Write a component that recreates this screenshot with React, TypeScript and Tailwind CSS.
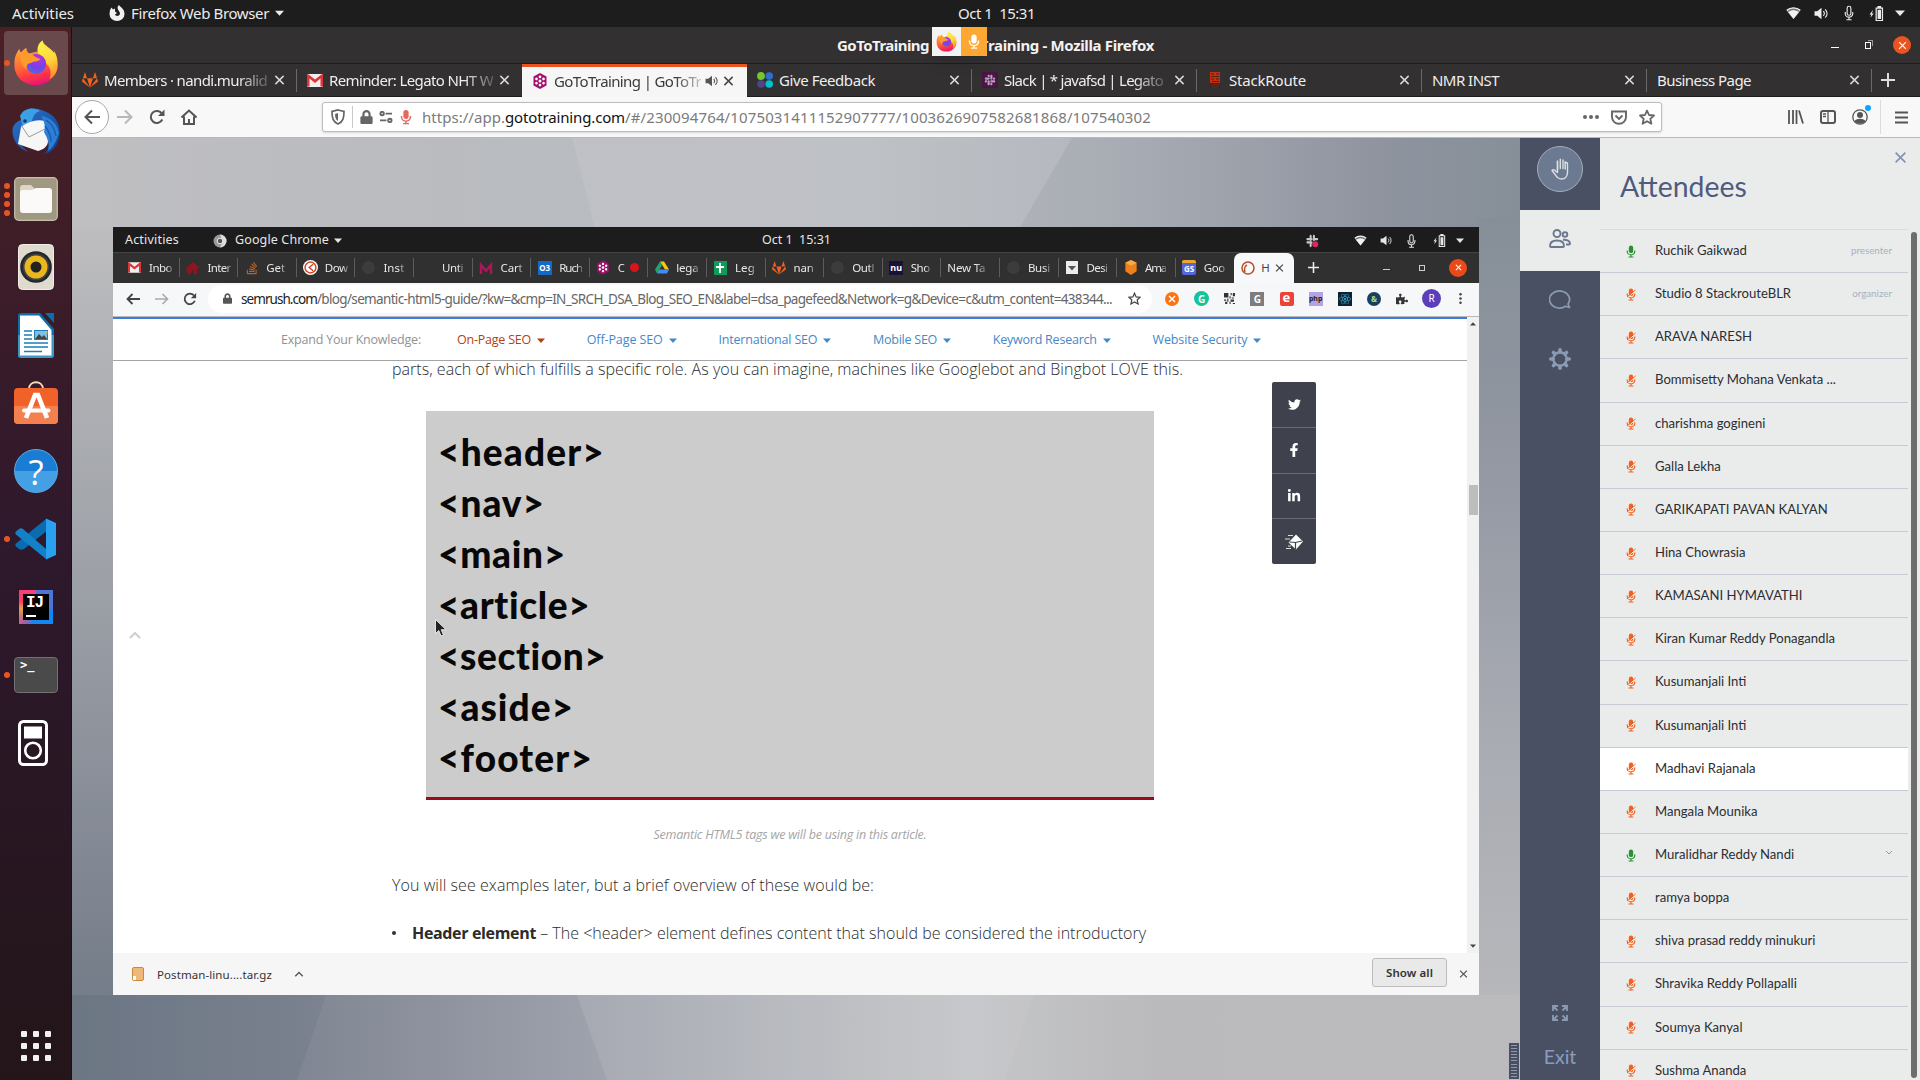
import React, { useLayoutEffect, useRef, useState } from "react";
import { FaTwitter, FaFacebookF, FaLinkedinIn, FaGitlab, FaSlack, FaStackOverflow, FaPuzzlePiece, FaReact, FaLock } from "react-icons/fa";

/* Text that is tracked so that it fills a given width exactly. */
function T({ w, className = "", children }: { w: number; className?: string; children: React.ReactNode }) {
  const ref = useRef<HTMLSpanElement>(null);
  const [ls, setLs] = useState(0);
  useLayoutEffect(() => {
    const el = ref.current;
    if (!el) return;
    const n = (el.textContent || "").length;
    setLs((w - el.getBoundingClientRect().width) / n);
  }, [w]);
  return (
    <span className={"block shrink-0 whitespace-pre " + className} style={{ width: w }}>
      <span ref={ref} className="inline-block" style={{ letterSpacing: ls }}>
        {children}
      </span>
    </span>
  );
}

const Firefox = ({ className }: { className: string }) => (
  <svg viewBox="0 0 48 48" className={className}>
    <defs>
      <linearGradient id="ffb" x1="0.3" y1="0" x2="0.6" y2="1">
        <stop offset="0" stopColor="#ffa436" />
        <stop offset="0.45" stopColor="#ff6a35" />
        <stop offset="0.75" stopColor="#ff3347" />
        <stop offset="1" stopColor="#e3127f" />
      </linearGradient>
      <linearGradient id="fff" x1="0.3" y1="0" x2="0.6" y2="1">
        <stop offset="0" stopColor="#fff24a" />
        <stop offset="0.55" stopColor="#ffd53a" />
        <stop offset="1" stopColor="#ff8a2c" />
      </linearGradient>
      <radialGradient id="ffp" cx="0.6" cy="0.25" r="0.85">
        <stop offset="0" stopColor="#b833e1" />
        <stop offset="0.5" stopColor="#7a3fe8" />
        <stop offset="1" stopColor="#4b6fe0" />
      </radialGradient>
    </defs>
    <path d="M2.500 17C4 13 5.500 11 6.500 9C7 11 7.500 12 8.500 13C10.500 10 12.500 9 14 8C14 11 15 13 17 14L36 9C42 13 46 19 46.500 26C46.500 38 36 47 24 47C11 47 1.500 38 1.500 26C1.500 22 1.600 20 2.500 17Z" fill="url(#ffb)" />
    <path d="M31 0.500C31 5 38 7 43 13.500C43 12 42.700 11.500 42.300 10.500C45.500 15 47 21 46.500 27C46 34 43 38 38 41C41 33 38 27 35 25C34 20 31 16 27 15C24 10 26 3 31 0.500Z" fill="url(#fff)" />
    <circle cx="24" cy="25" r="10.500" fill="url(#ffp)" />
    <path d="M8.500 13C12 14.500 16 13.500 20 14.500C22 17 25 19 28.500 19.500C27 23 22 21.500 19 24C15 24 13.500 27 14.500 31C9 27 6 20 8.500 13Z" fill="#ff9a2b" />
  </svg>
);

const Mic = ({ className }: { className: string }) => (
  <svg viewBox="0 0 16 20" className={className} fill="none" stroke="currentColor">
    <rect x="4.500" y="0.500" width="7" height="12" rx="3.500" fill="currentColor" stroke="none" />
    <path d="M2 8.500v1.500a6 5.500 0 0 0 12 0V8.500M8 15.500V18.500M4 18.800h8" strokeWidth="1.900" />
  </svg>
);
const MicLine = ({ className }: { className: string }) => (
  <svg viewBox="0 0 16 20" className={className} fill="none" stroke="currentColor" strokeWidth="1.500">
    <rect x="5.500" y="1" width="5" height="12" rx="2.500" />
    <path d="M3 8.500v2a5 5 0 0 0 10 0v-2M8 16v3M4.500 19h7" />
  </svg>
);
const X = ({ className, sw = 2 }: { className: string; sw?: number }) => (
  <svg viewBox="0 0 12 12" className={className} stroke="currentColor" strokeWidth={sw} fill="none">
    <path d="M1.500 1.500l9 9M10.500 1.500l-9 9" />
  </svg>
);
const Caret = ({ className }: { className: string }) => (
  <svg viewBox="0 0 10 6" className={className} fill="currentColor">
    <path d="M0 0.500h10L5 6z" />
  </svg>
);
const Wifi = ({ className }: { className: string }) => (
  <svg viewBox="0 0 16 14" className={className}>
    <path d="M0.500 4.500C5 0.300 11 0.300 15.500 4.500L8 13.500z" fill="#777" />
    <path d="M0.800 4.200C5 0.600 11 0.600 15.200 4.200" stroke="#f2f2f2" strokeWidth="1.500" fill="none" />
    <path d="M2.200 6C6 3.400 10 3.400 13.800 6L8 13.500z" fill="#f2f2f2" />
  </svg>
);
const Vol = ({ className }: { className: string }) => (
  <svg viewBox="0 0 16 14" className={className} fill="none" stroke="currentColor">
    <path d="M0.500 4.500h3L8 0.800v12.400L3.500 9.500h-3z" fill="currentColor" stroke="none" />
    <path d="M10 4.500c1.300 1.500 1.300 3.500 0 5M12 2.500c2.400 2.700 2.400 6.300 0 9" strokeWidth="1.200" />
  </svg>
);
const Battery = ({ className }: { className: string }) => (
  <svg viewBox="0 0 16 16" className={className} fill="currentColor">
    <path d="M4.500 4L0.500 9h2L1.500 12.500L5 8H3z" />
    <path d="M9 0h4v1.500h2V16H7V1.500h2zM8.300 2.800v12h5.400v-12z" fillRule="evenodd" />
    <rect x="9.200" y="4" width="3.600" height="9.800" />
  </svg>
);
const GoTo = ({ className }: { className: string }) => (
  <svg viewBox="0 0 16 16" className={className}>
    <path d="M8 0L14.500 3.500V12.500L8 16L1.500 12.500V3.500z" fill="#a3106f" />
    <circle cx="8" cy="8" r="1.500" fill="#fff" />
    {[0, 60, 120, 180, 240, 300].map((a) => (
      <circle key={a} cx="8" cy="3.900" r="1.350" fill="#fff" transform={`rotate(${a} 8 8)`} />
    ))}
  </svg>
);
const Gmail = ({ className }: { className: string }) => (
  <svg viewBox="0 0 16 13" className={className}>
    <rect width="16" height="13" rx="1" fill="#f3eeee" />
    <path d="M0 1v11.500h2.500V4.500L8 9l5.500-4.500v8H16V1a1 1 0 0 0-1.600-.6L8 5.500L1.600.4A1 1 0 0 0 0 1z" fill="#dc3535" />
  </svg>
);
const StackRoute = () => (
  <svg viewBox="0 0 16 16" className="h-4 w-4">
    <rect x="3" y="0" width="10" height="11" fill="#c2300f" />
    <rect x="3" y="11" width="10" height="5" fill="#3c2724" />
    <path d="M4 2h3M9 2h3M4 4.500h8M4 7h3M9 7h3M5 9.500h7" stroke="#5b1b10" strokeWidth="1.100" />
    <path d="M4 13h8M5 15h6" stroke="#7a2b1b" strokeWidth="0.800" />
  </svg>
);
const FourDots = () => (
  <svg viewBox="0 0 16 16" className="h-4 w-4">
    <circle cx="4" cy="4" r="3.900" fill="#76c72f" />
    <circle cx="12.200" cy="4" r="3.800" fill="#2f6fd0" />
    <circle cx="4" cy="12" r="3.800" fill="#4c4788" />
    <circle cx="12.200" cy="12" r="3.800" fill="#00c2cf" />
  </svg>
);

/* ---------- dock ---------- */
const Thunderbird = () => (
  <svg viewBox="0 0 48 48" className="h-12 w-12">
    <defs>
      <linearGradient id="tb" x1="0" y1="0" x2="1" y2="1">
        <stop offset="0" stopColor="#2b77cf" />
        <stop offset="1" stopColor="#123a8c" />
      </linearGradient>
    </defs>
    <path d="M10 6C14 1 24 0 32 4C44 8 49 18 47.500 29C46 39 40 46 32 47C38 41 38 36 37 33L8 37L16 45C5 41 0 32 0.500 22C2 16 6 14 9 13z" fill="url(#tb)" />
    <path d="M8 9C12 0 23 0 28 4C22 6 21 10 20 14L11 20C10 16 9 13 8 9z" fill="#3ba0e6" />
    <path d="M9 20C17 14 25 12 33 14L36 34C36 40 30 43 26 44L6 37z" fill="#f6f6f6" />
    <path d="M9 18L17 30L33 22" stroke="#9a9a9a" strokeWidth="1" fill="none" />
    <path d="M29 9C38 10 45 16 47 26C44 34 42 40 36 44C38 35 35 31 32 25C34 19 32 14 29 9z" fill="#2b80d6" />
    <path d="M34 13C40 17 43 22 44 29M33 19C37 24 39 29 39 35" stroke="#1c58ad" strokeWidth="1.300" fill="none" />
    <circle cx="13" cy="14" r="1.800" fill="#173a66" />
  </svg>
);
const Files = () => (
  <svg viewBox="0 0 44 44" className="h-11 w-11">
    <rect x="0.700" y="0.700" width="42.600" height="42.600" rx="4" fill="#a09880" stroke="#c5bfae" strokeWidth="1.200" />
    <path d="M6 11a3 3 0 0 1 3-3h8l4 4H35v8H6z" fill="#dcd6c7" />
    <path d="M6 16a3 3 0 0 1 3-3h9l4-2H35a3 3 0 0 1 3 3V33a3 3 0 0 1-3 3H9a3 3 0 0 1-3-3z" fill="#fbfaf8" />
  </svg>
);
const Rhythm = () => (
  <svg viewBox="0 0 36 46" className="h-[46px] w-9">
    <rect x="0.500" y="0.500" width="35" height="45" rx="4" fill="#dfdace" stroke="#f1eee6" />
    <circle cx="18" cy="23" r="15.800" fill="#24262b" />
    <circle cx="18" cy="23" r="13.300" fill="#3c4047" />
    <circle cx="18" cy="23" r="11.500" fill="#eab81c" />
    <circle cx="18" cy="23" r="5.500" fill="#222" />
  </svg>
);
const Writer = () => (
  <svg viewBox="0 0 36 45" className="h-[45px] w-9">
    <path d="M3 0H22L36 16V42a3 3 0 0 1-3 3H3a3 3 0 0 1-3-3V3a3 3 0 0 1 3-3z" fill="#0e6da8" />
    <path d="M0 22H36V42a3 3 0 0 1-3 3H3a3 3 0 0 1-3-3z" fill="#3b98c9" />
    <path d="M2 2.500H21L33.500 17V42.500H2z" fill="#fff" />
    <path d="M27 0H36V10z" fill="#0e6da8" />
    <path d="M6 18h8M6 22h8M6 26h8M6 30h24M6 34h24M6 38.500h18" stroke="#1b7fb7" strokeWidth="1.700" />
    <rect x="16.500" y="17.500" width="13" height="9" fill="#7fc0ea" stroke="#1b7fb7" />
    <path d="M17 26l4-5 3 3 2-2 3 4z" fill="#444" />
    <path d="M27 18h2.500v3z" fill="#f4b81c" />
  </svg>
);
const Software = () => (
  <svg viewBox="0 0 44 44" className="h-11 w-11">
    <path d="M15 8C15 -1 29 -1 29 8" stroke="#f4dfb5" strokeWidth="1.800" fill="none" />
    <rect y="7" width="44" height="36" rx="4" fill="#f0622a" />
    <path d="M0 25H44V39a4 4 0 0 1-4 4H4a4 4 0 0 1-4-4z" fill="#f47f4f" />
    <path d="M12 37L21 14H24L33 37" stroke="#fff" strokeWidth="4.600" fill="none" />
    <path d="M10 29.500H34.500" stroke="#fff" strokeWidth="4" strokeLinecap="round" />
  </svg>
);
const Help = () => (
  <div className="flex h-11 w-11 items-center justify-center rounded-full border border-[#5cabe8] bg-linear-to-b from-[#1b7cd3] from-50% to-[#44a0e4] to-50% font-['Open_Sans'] text-[35px] leading-none text-white">?</div>
);
const Code = () => (
  <svg viewBox="0 0 42 42" className="h-[42px] w-[42px]">
    <path d="M4 31L1 28.500C0 27.500 0 26.500 1 25.500L31 1L33 12L9 31C7 32 6 32 4 31z" fill="#0a6bb0" />
    <path d="M4 11L1 13.500C0 14.500 0 15.500 1 16.500L31 41V31L8 11C7 10 5 10 4 11z" fill="#1480c8" />
    <path d="M31 0.500L41 5V37L31 41.500z" fill="#29a0f0" />
  </svg>
);
const IJ = () => (
  <div className="flex h-[34px] w-[34px] items-center justify-center bg-[conic-gradient(#4f74d8_0deg,#4f74d8_90deg,#0f86f5_110deg,#1787f0_190deg,#b35aa0_220deg,#e9a03c_265deg,#ff3a6c_290deg,#f2447a_350deg)]">
    <div className="flex h-[26px] w-[26px] flex-col bg-black px-[3px] pt-px">
      <span className="h-[16px] font-['Liberation_Mono'] text-[16px] font-bold leading-[17px] tracking-[-1px] text-white">IJ</span>
      <span className="mt-[4px] h-[2px] w-[10px] bg-white" />
    </div>
  </div>
);
const Terminal = () => (
  <div className="h-[36px] w-11 rounded-[4px] border border-[#727272] bg-[#4a4a4a] pl-[5px] font-['DejaVu_Sans_Mono'] text-[12px] font-bold leading-[15px] text-white">&gt;_</div>
);
const IPod = () => (
  <svg viewBox="0 0 30 46" className="mr-[6px] h-[46px] w-[30px]" fill="none" stroke="#fff">
    <rect x="1.500" y="1.500" width="27" height="43" rx="4" strokeWidth="3" />
    <rect x="6" y="6.500" width="18" height="12" fill="#fff" stroke="none" />
    <circle cx="15" cy="30.500" r="7.800" strokeWidth="2.600" />
  </svg>
);

const dock: { icon: React.ReactNode; dots: number; on?: boolean }[] = [
  { icon: <Firefox className="h-[46px] w-[46px]" />, dots: 1, on: true },
  { icon: <Thunderbird />, dots: 0 },
  { icon: <Files />, dots: 4 },
  { icon: <Rhythm />, dots: 0 },
  { icon: <Writer />, dots: 0 },
  { icon: <Software />, dots: 0 },
  { icon: <Help />, dots: 0 },
  { icon: <Code />, dots: 1 },
  { icon: <IJ />, dots: 0 },
  { icon: <Terminal />, dots: 1 },
  { icon: <IPod />, dots: 0 },
];

function Dock() {
  return (
    <div className="flex w-[72px] shrink-0 flex-col border-r border-[#1c0f1c] bg-linear-to-b from-[#4a2024] via-[#2e182c] via-50% to-[#231519] pt-[2px]">
      {dock.map((d, i) => (
        <div key={i} className="flex h-[68px] items-center">
          <div className={"ml-1 flex h-16 w-16 items-center rounded-[4px] " + (d.on ? "bg-[#6a494c]" : "")}>
            <div className="flex w-[6px] flex-col items-start gap-[3px]">
              {Array.from({ length: d.dots }, (_, k) => (
                <span key={k} className="h-[6px] w-[6px] shrink-0 rounded-full bg-[#e95420]" />
              ))}
            </div>
            <div className="flex w-[52px] items-center justify-center">{d.icon}</div>
          </div>
        </div>
      ))}
      <div className="mt-auto mb-[19px] ml-[21px] grid w-[30px] grid-cols-3 gap-[6px]">
        {Array.from({ length: 9 }, (_, k) => (
          <span key={k} className="h-[6px] w-[6px] rounded-[1px] bg-[#f1f1f1]" />
        ))}
      </div>
    </div>
  );
}

/* ---------- Firefox window ---------- */
const tabs: { label: string; w: number; icon?: React.ReactNode; active?: boolean; fade?: boolean }[] = [
  { label: "Members · nandi.muralid", w: 163, icon: <FaGitlab className="h-4 w-4 text-[#f4601f]" />, fade: true },
  { label: "Reminder: Legato NHT W", w: 164, icon: <Gmail className="h-[13px] w-4" />, fade: true },
  { label: "GoToTraining | GoToTr", w: 147, icon: <GoTo className="h-[18px] w-4" />, active: true, fade: true },
  { label: "Give Feedback", w: 96, icon: <FourDots /> },
  { label: "Slack | * javafsd | Legato", w: 159, icon: <span className="flex h-4 w-4 items-center justify-center bg-[#4b1447]"><FaSlack className="h-3 w-3 text-[#b9a0b8]" /></span>, fade: true },
  { label: "StackRoute", w: 77, icon: <StackRoute /> },
  { label: "NMR INST", w: 67 },
  { label: "Business Page", w: 94 },
];

function FirefoxTabs() {
  return (
    <div className="flex h-[33px] shrink-0 bg-[#323031]">
      {tabs.map((t, i) => (
        <div
          key={i}
          className={
            "flex w-[225px] shrink-0 items-center pl-[10px] " +
            (t.active ? "border-t-[3px] border-[#e95420] bg-[#f6f6f6] pb-[3px] text-[#3a3a3a]" : "border-b border-[#1d1d1d] text-[#eeeeee]")
          }
        >
          {t.icon && <span className="mr-[6px] flex w-4 items-center">{t.icon}</span>}
          <div className={t.active ? "w-[148px]" : t.icon ? "w-[165px]" : "w-[187px]"}>
            <T w={t.w} className={"text-[15px] leading-6 " + (t.fade ? "[mask-image:linear-gradient(90deg,#000_82%,rgba(0,0,0,0.25))]" : "")}>{t.label}</T>
          </div>
          {t.active && <Vol className="ml-[3px] h-[12px] w-[14px] text-[#555]" />}
          <X className={"h-[12px] w-[11px] " + (t.active ? "ml-[4px] text-[#444]" : "ml-[5px] text-[#d8d8d8]")} sw={1.6} />
          {!t.active && i !== 1 && <span className="ml-auto h-[23px] w-px bg-[#6a6869]" />}
        </div>
      ))}
      <div className="flex flex-1 items-center border-b border-[#1d1d1d] pl-[9px]">
        <svg viewBox="0 0 14 14" className="h-[14px] w-[14px]" stroke="#dedede" strokeWidth="2"><path d="M7 0v14M0 7h14" /></svg>
      </div>
    </div>
  );
}

function FirefoxToolbar() {
  const s = { fill: "none", stroke: "#555", strokeWidth: 2 };
  return (
    <div className="flex h-[41px] shrink-0 items-center border-b border-[#b8b8b8] bg-[#f8f8f8]">
      <div className="ml-[3px] flex h-[34px] w-[34px] items-center justify-center rounded-full border border-[#a8a8a8] bg-white">
        <svg viewBox="0 0 16 16" className="h-4 w-4" {...s}><path d="M16 8H1.500M8 1.500L1.500 8L8 14.500" /></svg>
      </div>
      <svg viewBox="0 0 16 16" className="ml-[8px] h-4 w-4" fill="none" stroke="#b8b8b8" strokeWidth="2"><path d="M0 8h14.500M8 1.500L14.500 8L8 14.500" /></svg>
      <svg viewBox="0 0 16 16" className="ml-[16px] h-4 w-4" {...s}><path d="M13.300 10.500A6 6 0 1 1 13 5" /><path d="M15.500 0.500V7H9z" fill="#555" stroke="none" /></svg>
      <svg viewBox="0 0 16 16" className="ml-[16px] h-4 w-4" {...s}><path d="M0.500 8.500L8 1.500L15.500 8.500M3 7.500V15h10V7.500M8 15V10" /></svg>
      <div className="ml-[125px] flex h-[30px] w-[1340px] items-center rounded-[3px] border border-[#bcbcbc] bg-white shadow-sm">
        <svg viewBox="0 0 14 16" className="ml-[8px] h-4 w-[14px]" fill="none" stroke="#666" strokeWidth="1.700"><path d="M7 1L13 2.500C13 9 12 13 7 15C2 13 1 9 1 2.500z" /><path d="M7 4v8C5 11 4.200 9 4 5z" fill="#666" stroke="none" /></svg>
        <span className="ml-[7px] h-[22px] w-px bg-[#c9c9c9]" />
        <FaLock className="ml-[7px] h-[14px] w-[13px] text-[#666]" />
        <svg viewBox="0 0 16 14" className="ml-[6px] h-[12px] w-[14px]" fill="none" stroke="#666" strokeWidth="2.200"><path d="M7.500 3H15M1 11H8.500" /><circle cx="3.500" cy="3" r="2" /><circle cx="12.500" cy="11" r="2" /></svg>
        <Mic className="ml-[7px] h-4 w-[12px] text-[#e5685c]" />
        <T w={83} className="ml-[10px] text-[15px] leading-6 text-[#7b7b7b]">https://app.</T>
        <T w={120} className="text-[15px] leading-6 text-[#111]">gototraining.com</T>
        <T w={526} className="text-[15px] leading-6 text-[#7b7b7b]">/#/230094764/1075031411152907777/1003626907582681868/107540302</T>
        <svg viewBox="0 0 16 4" className="ml-[432px] h-1 w-4" fill="#666"><circle cx="2" cy="2" r="2" /><circle cx="8" cy="2" r="2" /><circle cx="14" cy="2" r="2" /></svg>
        <svg viewBox="0 0 16 15" className="ml-[12px] h-[15px] w-4" fill="none" stroke="#666" strokeWidth="1.900"><path d="M1 1.500H15V7a7 6.800 0 0 1-14 0z" /><path d="M4.500 5.500L8 9l3.500-3.500" /></svg>
        <svg viewBox="0 0 16 16" className="ml-[12px] h-4 w-4" fill="none" stroke="#666" strokeWidth="1.800"><path d="M8 1.500l2 4.500 5 .5-3.700 3.300 1.100 4.900L8 12.200 3.600 14.700l1.100-4.900L1 6.500 6 6z" strokeLinejoin="round" /></svg>
      </div>
      <svg viewBox="0 0 16 14" className="ml-[126px] h-[14px] w-4" {...s}><path d="M1 0V14M5 0V14M8.500 0V14M11 0.500L15 13.500" strokeWidth="1.800" /></svg>
      <svg viewBox="0 0 16 14" className="ml-[16px] h-[14px] w-4" {...s}><rect x="1" y="1" width="14" height="12" rx="2" /><path d="M8 1V13M3 4h3M3 6.500h3" strokeWidth="1.300" /></svg>
      <div className="relative ml-[16px] h-4 w-4">
        <svg viewBox="0 0 16 16" className="h-4 w-4"><circle cx="8" cy="8" r="7.200" fill="none" stroke="#555" strokeWidth="1.300" /><circle cx="8" cy="6" r="3" fill="#555" /><path d="M2.500 12C5 9 11 9 13.500 12C11 15.500 5 15.500 2.500 12z" fill="#555" /></svg>
        <span className="absolute -right-[3px] -top-[4px] h-[6px] w-[6px] rounded-full bg-[#0aa5ff]" />
      </div>
      <span className="ml-[12px] h-[34px] w-px bg-[#dcdcdc]" />
      <svg viewBox="0 0 13 13" className="ml-[14px] h-[13px] w-[13px]" {...s}><path d="M0 1.500H13M0 6.500H13M0 11.500H13" /></svg>
    </div>
  );
}

/* ---------- shared screen ---------- */
const Globe = () => <span className="h-[13px] w-[13px] rounded-full bg-[#3b3c3c]" />;
const miniTabs: { label: string; w: number; icon?: React.ReactNode; rec?: boolean }[] = [
  { label: "Inbo", w: 23, icon: <Gmail className="h-[11px] w-[13px]" /> },
  { label: "Inter", w: 23, icon: <svg viewBox="0 0 14 14" className="h-[14px] w-[14px]"><path d="M0 7L7 1l7 6-3 1v5H8L7 8l-2 5H2z" fill="#8e1420" /></svg> },
  { label: "Get", w: 19, icon: <FaStackOverflow className="h-[14px] w-[14px] text-[#b5622e]" /> },
  { label: "Dow", w: 23, icon: <span className="flex h-[15px] w-[15px] items-center justify-center rounded-full bg-white"><svg viewBox="0 0 10 10" className="h-[13px] w-[13px]" stroke="#d8421f" strokeWidth="1.100" fill="none"><circle cx="5" cy="5" r="4.200" /><path d="M7 2.500L4 5l3 2.500" /></svg></span> },
  { label: "Inst", w: 21, icon: <Globe /> },
  { label: "Unti", w: 21, icon: <span className="h-3 w-[13px]" /> },
  { label: "Cart", w: 22, icon: <svg viewBox="0 0 14 12" className="h-3 w-[14px]" stroke="#b01558" strokeWidth="2.400" fill="none"><path d="M2 12V3l5 6 5-6v9" /></svg> },
  { label: "Ruch", w: 23, icon: <span className="flex h-[14px] w-[14px] items-center justify-center bg-[#1469c4] text-[8px] font-bold leading-none text-white">O3</span> },
  { label: "C", w: 7, icon: <GoTo className="h-[15px] w-[14px]" />, rec: true },
  { label: "lega", w: 22, icon: <svg viewBox="0 0 14 12" className="h-[13px] w-[14px]"><path d="M5 0h4l5 8h-4z" fill="#fbc518" /><path d="M5 0L0 8l2 4L7 4z" fill="#1fa463" /><path d="M2 12l2-4h10l-2 4z" fill="#4688f4" /></svg> },
  { label: "Leg", w: 20, icon: <span className="flex h-[14px] w-[13px] items-center justify-center bg-[#109b5a]"><svg viewBox="0 0 10 10" className="h-[10px] w-[10px]" stroke="#fff" strokeWidth="1.800"><path d="M1 4h8M5 0v10" /></svg></span> },
  { label: "nan", w: 20, icon: <FaGitlab className="h-[14px] w-[14px] text-[#f4601f]" /> },
  { label: "Outl", w: 22, icon: <Globe /> },
  { label: "Sho", w: 19, icon: <span className="flex h-[14px] w-[14px] items-center justify-center bg-[#171335] text-[9px] font-bold leading-none text-white">nu</span> },
  { label: "New Ta", w: 38 },
  { label: "Busi", w: 22, icon: <Globe /> },
  { label: "Desi", w: 21, icon: <span className="flex h-[13px] w-[12px] items-center justify-center bg-[#ececec]"><Caret className="h-2 w-2 text-[#555]" /></span> },
  { label: "Ama", w: 21, icon: <svg viewBox="0 0 14 16" className="h-[15px] w-[14px]"><path d="M7 0l6 3v9l-6 4-6-4V3z" fill="#f0811a" /><path d="M7 0l6 3-6 3-6-3z" fill="#f9a84a" /></svg> },
  { label: "Goo", w: 21, icon: <span className="flex h-[15px] w-[14px] items-center justify-center rounded-[2px] border-t-[3px] border-[#f0a62e] bg-[#5466d8] text-[8px] font-bold leading-none text-white">GS</span> },
];

function MiniTabs() {
  return (
    <div className="flex h-[31px] shrink-0 items-end border-t border-[#444] bg-[#303030] pl-[8px]">
      {miniTabs.map((t, i) => (
        <div key={i} className="flex h-[30px] w-[58.6px] shrink-0 items-center pb-px pl-[6px]">
          {t.icon && <span className="mr-[7px] flex w-[15px] shrink-0 items-center justify-center">{t.icon}</span>}
          <T w={t.w} className="text-[11.500px] leading-5 text-[#e8e8e8] [mask-image:linear-gradient(90deg,#000_75%,rgba(0,0,0,0.35))]">{t.label}</T>
          {t.rec && <span className="ml-[5px] h-[9px] w-[9px] rounded-full bg-[#d8141c]" />}
          {i !== 18 && <span className="ml-auto h-[19px] w-px shrink-0 bg-[#5c5c5c]" />}
        </div>
      ))}
      <div className="flex h-[30px] w-[60px] shrink-0 items-center rounded-t-[7px] bg-[#f7f8fa] pb-px pl-[7px]">
        <svg viewBox="0 0 14 14" className="h-[14px] w-[14px]" fill="none" stroke="#b5502a" strokeWidth="1.500"><circle cx="7" cy="7" r="6" /><path d="M4 11C3 8 4 5 6 4" /></svg>
        <T w={7} className="ml-[6px] text-[11.500px] leading-5 text-[#444]">H</T>
        <X className="ml-[7px] h-[10px] w-[9px] text-[#444]" sw={1.6} />
      </div>
      <div className="flex h-[30px] flex-1 items-center pb-px">
        <svg viewBox="0 0 12 12" className="ml-[14px] h-[11px] w-[11px]" stroke="#eee" strokeWidth="1.700"><path d="M6 0v12M0 6h12" /></svg>
        <span className="ml-[64px] mt-[4px] h-[1.500px] w-[7px] bg-[#ccc]" />
        <span className="ml-[29px] h-[6px] w-[6px] border border-[#ccc]" />
        <span className="ml-[24px] flex h-[18px] w-[18px] items-center justify-center rounded-full bg-[#ea4a1a] text-white"><X className="h-[7px] w-[7px]" sw={1.800} /></span>
      </div>
    </div>
  );
}

function MiniToolbar() {
  return (
    <div className="flex h-[34px] shrink-0 items-center border-b border-[#b9b9b9] bg-[#f6f7f9] pb-[2px]">
      <svg viewBox="0 0 14 12" className="ml-[13px] h-[12px] w-[14px]" fill="none" stroke="#444" strokeWidth="1.800"><path d="M14 6H1.500M6.500 1L1.500 6l5 5" /></svg>
      <svg viewBox="0 0 14 12" className="ml-[15px] h-[12px] w-[14px]" fill="none" stroke="#aaa" strokeWidth="1.600"><path d="M0 6h12.500M7.500 1l5 5-5 5" /></svg>
      <svg viewBox="0 0 16 16" className="ml-[14px] h-[14px] w-[14px]" fill="none" stroke="#444" strokeWidth="2"><path d="M13.500 10A6 6 0 1 1 12.500 4" /><path d="M15 1V7H9z" fill="#444" stroke="none" /></svg>
      <div className="ml-[11px] flex h-[28px] w-[944px] items-center rounded-full bg-white">
        <FaLock className="ml-[15px] h-[11px] w-[9px] text-[#555]" />
        <T w={76} className="ml-[9px] text-[13.500px] leading-5 text-[#222]">semrush.com</T>
        <T w={795} className="text-[13.500px] leading-5 text-[#666]">/blog/semantic-html5-guide/?kw=&amp;cmp=IN_SRCH_DSA_Blog_SEO_EN&amp;label=dsa_pagefeed&amp;Network=g&amp;Device=c&amp;utm_content=438344...</T>
        <svg viewBox="0 0 16 16" className="ml-[16px] h-[13px] w-[13px]" fill="none" stroke="#444" strokeWidth="1.500"><path d="M8 1.500l2 4.500 5 .5-3.700 3.300 1.100 4.900L8 12.200 3.600 14.700l1.100-4.900L1 6.500 6 6z" /></svg>
      </div>
      <div className="ml-[13px] flex w-[243px] items-center justify-between text-[10px] font-bold leading-none text-white">
        <span className="flex h-[14px] w-[14px] items-center justify-center rounded-full bg-[#fa7414]"><X className="h-[8px] w-[8px]" sw={2.200} /></span>
        <span className="flex h-[15px] w-[15px] items-center justify-center rounded-full bg-[#15c39a]">G</span>
        <svg viewBox="0 0 10 10" className="h-[11px] w-[11px]" fill="#333"><path d="M0 0h4v4H0zM6 0h1v2H6zM8 0h2v3H8zM5 3h1v2H5zM0 6h2v1H0zM3 5h1v3H3zM1 8h2v2H1zM6 6h3v2H6zM5 8h1v2H5zM8 9h2v1H8zM7 4h2v1H7z" /></svg>
        <span className="flex h-[14px] w-[14px] items-center justify-center bg-[#7d7d7d]">G</span>
        <span className="flex h-[14px] w-[14px] items-center justify-center rounded-[2px] bg-[#ec4338] pb-[2px] text-[13px]">e</span>
        <span className="flex h-[14px] w-[14px] items-center justify-center bg-[#b3a3e3] text-[7px] text-[#222]">php</span>
        <span className="flex h-[14px] w-[14px] items-center justify-center bg-[#10202e]"><FaReact className="h-3 w-3 text-[#2fa8d8]" /></span>
        <span className="flex h-[14px] w-[14px] items-center justify-center rounded-full bg-[#154063] text-[8px] text-[#b6dd6a]">&amp;</span>
        <FaPuzzlePiece className="h-[12px] w-[12px] text-[#333]" />
      </div>
      <span className="ml-[14px] flex h-[19px] w-[19px] items-center justify-center rounded-full bg-[#5b3fb8] text-[10px] text-white">R</span>
      <svg viewBox="0 0 3 13" className="ml-[18px] h-[11px] w-[3px]" fill="#444"><circle cx="1.500" cy="1.500" r="1.500" /><circle cx="1.500" cy="6.500" r="1.500" /><circle cx="1.500" cy="11.500" r="1.500" /></svg>
    </div>
  );
}

const nav: [string, number][] = [
  ["Off-Page SEO", 76],
  ["International SEO", 99],
  ["Mobile SEO", 64],
  ["Keyword Research", 104],
  ["Website Security", 95],
];
const tags = ["<header>", "<nav>", "<main>", "<article>", "<section>", "<aside>", "<footer>"];
const tagW = [167, 107, 128, 153, 169, 136, 155];

function SharedScreen() {
  return (
    <div className="mt-[89px] ml-[41px] flex h-[768px] w-[1366px] shrink-0 flex-col bg-white">
      <div className="flex h-[25px] shrink-0 items-center bg-[#1c1c1c] pt-[2px] text-[12.500px] leading-none text-[#e6e6e6]">
        <T w={54} className="ml-[12px]">Activities</T>
        <svg viewBox="0 0 14 14" className="ml-[34px] h-[14px] w-[14px]"><circle cx="7" cy="7" r="6.500" fill="#999" /><path d="M7 .5A6.500 6.500 0 0 1 7 13.500L10 8z" fill="#ddd" /><circle cx="7" cy="7" r="2.800" fill="#555" stroke="#eee" strokeWidth="1" /></svg>
        <T w={94} className="ml-[8px]">Google Chrome</T>
        <Caret className="ml-[5px] h-[5px] w-[8px]" />
        <T w={69} className="ml-[420px]">Oct 1  15:31</T>
        <svg viewBox="0 0 14 14" className="ml-[475px] h-[14px] w-[13px]" fill="none" strokeWidth="2.200" strokeLinecap="round">
          <path d="M5 1.500V6M8.500 1.500V6M1.500 5H6M8.500 5H12M1.500 8.500H6M5 8.500V12.500" stroke="#c9c9c9" />
          <circle cx="10" cy="10.500" r="3.200" fill="#e0245e" stroke="none" />
        </svg>
        <Wifi className="ml-[35px] h-[11px] w-[13px]" />
        <Vol className="ml-[13px] h-[11px] w-[13px]" />
        <MicLine className="ml-[13px] h-[14px] w-[11px]" />
        <Battery className="ml-[16px] h-[13px] w-[13px]" />
        <Caret className="ml-[10px] h-[5px] w-[8px]" />
      </div>
      <MiniTabs />
      <MiniToolbar />
      <div className="flex h-[636px] shrink-0">
        <div className="flex w-[1354px] shrink-0 flex-col overflow-hidden">
          <div className="flex h-[44px] shrink-0 items-center border-t-2 border-b border-t-[#3f7ce0] border-b-[#a5a5a5] pt-[2px] font-['Open_Sans'] text-[12.500px] text-[#4388c9]">
            <T w={140} className="ml-[168px] text-[#929292]">Expand Your Knowledge:</T>
            <T w={74} className="ml-[36px] text-[#b5400f]">On-Page SEO</T>
            <Caret className="ml-[6px] h-[5px] w-[8px] text-[#b5400f]" />
            {nav.map(([l, w]) => (
              <div key={l} className="ml-[41.700px] flex items-center">
                <T w={w}>{l}</T>
                <Caret className="ml-[6px] h-[5px] w-[8px]" />
              </div>
            ))}
          </div>
          <div className="flex">
            <div className="flex w-[313px] shrink-0 flex-col">
              <svg viewBox="0 0 12 8" className="mt-[270px] ml-[16px] h-2 w-3" fill="none" stroke="#cfcfcf" strokeWidth="2"><path d="M1 7l5-5 5 5" /></svg>
            </div>
            <div className="flex w-[728px] shrink-0 flex-col">
              <T w={791} className="-ml-[34px] -mt-[4px] font-['Open_Sans'] text-[16px] font-light leading-6 text-[#2b2b2b]">parts, each of which fulfills a specific role. As you can imagine, machines like Googlebot and Bingbot LOVE this.</T>
              <div className="relative mt-[30px] flex h-[389px] flex-col border-b-[3px] border-[#970c17] bg-[#cccccc] pt-[15px] pl-[12px]">
                {tags.map((t, i) => (
                  <T key={t} w={tagW[i]} className="h-[51px] font-['Lato'] text-[37px] font-black leading-[51px] text-[#080808]">{t}</T>
                ))}
                <svg viewBox="0 0 12 18" className="absolute left-[9px] top-[208px] h-[18px] w-[12px]"><path d="M0.500 0.500V14.500L3.800 11.500L6 17l2.500-1-2.300-5.300H11z" fill="#222" stroke="#eee" strokeWidth="0.900" /></svg>
              </div>
              <T w={273} className="mt-[25px] self-center font-['Open_Sans'] text-[12.500px] italic leading-5 text-[#a5a5a5]">Semantic HTML5 tags we will be using in this article.</T>
              <T w={482} className="-ml-[34px] mt-[28px] font-['Open_Sans'] text-[16px] font-light leading-6 text-[#2b2b2b]">You will see examples later, but a brief overview of these would be:</T>
              <div className="-ml-[34px] mt-[24px] flex items-center font-['Open_Sans'] text-[16px] leading-6 text-[#2b2b2b]">
                <span className="mr-[16px] h-[4px] w-[4px] rounded-full bg-[#333]" />
                <T w={124} className="font-bold">Header element</T>
                <T w={610} className="font-light"> – The &lt;header&gt; element defines content that should be considered the introductory</T>
              </div>
            </div>
            <div className="mt-[21px] ml-[118px] flex h-[182px] w-[44px] flex-col divide-y divide-[#6a6b76] overflow-hidden rounded-[2px] bg-[#3f414c] text-white">
              <span className="flex flex-1 items-center justify-center"><FaTwitter className="h-[13px] w-[13px]" /></span>
              <span className="flex flex-1 items-center justify-center"><FaFacebookF className="h-[14px] w-[14px]" /></span>
              <span className="flex flex-1 items-center justify-center"><FaLinkedinIn className="h-[14px] w-[14px]" /></span>
              <span className="flex flex-1 items-center justify-center">
                <svg viewBox="0 0 18 16" className="h-4 w-[18px]"><path d="M11 0.500L18 7.500L11 15.500L3.500 8.500z" fill="#fff" /><path d="M4.500 8L10.500 8.500L17 7M10.500 8.500V15" stroke="#3f414c" strokeWidth="1.200" fill="none" /><path d="M3 1.500h5M0 5h5M1 14.500h5M3 12h3" stroke="#ddd" strokeWidth="1" /></svg>
              </span>
            </div>
          </div>
        </div>
        <div className="flex w-[12px] flex-col items-center bg-[#f1f1f1] py-[5px]">
          <Caret className="h-[4px] w-[6px] rotate-180 text-[#444]" />
          <span className="mt-[159px] ml-px h-[30px] w-[9px] bg-[#bdbdbd]" />
          <Caret className="mt-auto h-[4px] w-[6px] text-[#444]" />
        </div>
      </div>
      <div className="flex flex-1 items-center bg-[#f6f6f6] text-[11.500px] text-[#333]">
        <span className="ml-[19px] flex h-[14px] w-[12px] items-end rounded-[2px] border border-[#c98a3c] bg-[#f0b878]"><i className="h-1 w-[3px] bg-white" /></span>
        <T w={115} className="ml-[13px] mt-[1px]">Postman-linu....tar.gz</T>
        <svg viewBox="0 0 12 8" className="ml-[22px] h-[6px] w-[10px]" fill="none" stroke="#555" strokeWidth="1.800"><path d="M1 7l5-5 5 5" /></svg>
        <div className="-mt-[3px] ml-[1068px] flex h-[29px] w-[75px] items-center justify-center rounded-[3px] border border-[#bcbcbc] bg-[#e9e9e9]">
          <T w={47} className="font-semibold">Show all</T>
        </div>
        <X className="ml-[12px] h-[10px] w-[9px] text-[#555]" sw={1.700} />
      </div>
    </div>
  );
}

/* ---------- attendees ---------- */
const people: { n: string; tag?: string; live?: boolean; sel?: boolean; menu?: boolean }[] = [
  { n: "Ruchik Gaikwad", tag: "presenter", live: true },
  { n: "Studio 8 StackrouteBLR", tag: "organizer" },
  { n: "ARAVA NARESH" },
  { n: "Bommisetty Mohana Venkata ..." },
  { n: "charishma gogineni" },
  { n: "Galla Lekha" },
  { n: "GARIKAPATI PAVAN KALYAN" },
  { n: "Hina Chowrasia" },
  { n: "KAMASANI HYMAVATHI" },
  { n: "Kiran Kumar Reddy Ponagandla" },
  { n: "Kusumanjali Inti" },
  { n: "Kusumanjali Inti" },
  { n: "Madhavi Rajanala", sel: true },
  { n: "Mangala Mounika" },
  { n: "Muralidhar Reddy Nandi", live: true, menu: true },
  { n: "ramya boppa" },
  { n: "shiva prasad reddy minukuri" },
  { n: "Shravika Reddy Pollapalli" },
  { n: "Soumya Kanyal" },
  { n: "Sushma Ananda" },
];

function Rail() {
  return (
    <div className="flex w-[80px] shrink-0 flex-col items-center bg-[#495063] text-[#8b9bb4]">
      <div className="mt-[8px] flex h-[46px] w-[46px] shrink-0 items-center justify-center rounded-full border border-[#a3aebd] bg-[#6b7a90]">
        <svg viewBox="0 0 18 22" className="h-[22px] w-[18px]" fill="none" stroke="#dcdfe4" strokeWidth="1.400" strokeLinecap="round" strokeLinejoin="round">
          <path d="M6.500 12V3.200M9.300 10.500V1.200M12 10.500V2M14.200 11V4" />
          <path d="M16.500 6v8.500c0 4-2.500 6.500-6 6.500c-3 0-4.500-1.500-6-4L1 12.500c1.300-1.400 3-.6 3.500.5l2 1.500V3.200M14.200 4.500c1.500-.5 2.300 0 2.300 2.500" />
        </svg>
      </div>
      <div className="mt-[18px] flex h-[61px] w-full shrink-0 items-center justify-center bg-[#eaeceb]">
        <svg viewBox="0 0 22 19" className="mb-[5px] h-[19px] w-[22px]" fill="none" stroke="#6b7890" strokeWidth="1.900"><circle cx="8" cy="4.500" r="3.500" /><circle cx="16" cy="5.500" r="2.300" /><path d="M1 17C1 13 4 11.500 8 11.500S15 13 15 17C15 17.700 14.500 18 14 18H2C1.500 18 1 17.700 1 17zM14 10.800C18 10.500 21 12 21 14.500C21 15 20.500 15.500 20 15.500H17" /></svg>
      </div>
      <svg viewBox="0 0 22 20" className="mt-[18px] h-[20px] w-[22px]" fill="none" stroke="currentColor" strokeWidth="1.700"><path d="M20.500 18.500L16.500 17.300A10 8.500 0 1 1 19 15z" strokeLinejoin="round" /></svg>
      <svg viewBox="0 0 22 22" className="mt-[39px] h-[22px] w-[22px]" fill="none" stroke="currentColor">
        <circle cx="11" cy="11" r="6.700" strokeWidth="2.400" />
        {[0, 45, 90, 135, 180, 225, 270, 315].map((a) => (
          <path key={a} d="M11 1.800V4" strokeWidth="3.600" strokeLinecap="round" transform={`rotate(${a} 11 11)`} />
        ))}
      </svg>
      <svg viewBox="0 0 16 16" className="mt-auto h-4 w-4" fill="none" stroke="currentColor" strokeWidth="1.800"><path d="M1 6V1h5M1 1l4.500 4.500M10 1h5v5M15 1l-4.500 4.500M1 10v5h5M1 15l4.500-4.500M15 10v5h-5M15 15l-4.500-4.500" /></svg>
      <span className="mt-[22px] mb-[9px] font-['Lato'] text-[19.500px] leading-7 text-[#8b9bc0]">Exit</span>
    </div>
  );
}

function Attendees() {
  return (
    <div className="flex w-[320px] shrink-0 flex-col bg-[#eaeceb] font-['Lato']">
      <div className="flex h-[91px] shrink-0 justify-between">
        <h1 className="mt-[30px] ml-[20px] text-[28.400px] leading-9 text-[#4f5b7e]">Attendees</h1>
        <X className="mt-[13px] mr-[13px] h-[13px] w-[13px] text-[#7c92ac]" sw={1.400} />
      </div>
      <div className="flex min-h-0 flex-1">
        <div className="h-full w-[308px] overflow-hidden border-t border-[#d9dbdd]">
          {people.map((p, i) => (
            <div key={i} className={"flex h-[43.150px] items-center border-b border-[#c6cad4] pb-[2px] " + (p.sel ? "bg-white" : "")}>
              <div className="relative mt-[2px] ml-[26px] h-[13px] w-[10px]">
                <Mic className={"h-[13px] w-[10px] " + (p.live ? "text-[#2b9132]" : "text-[#f4601e]")} />
                {!p.live && (
                  <svg viewBox="0 0 10 13" className="absolute inset-0 h-[13px] w-[10px]"><path d="M0.500 10.500L9.500 3" stroke={p.sel ? "#fff" : "#eaeceb"} strokeWidth="1" /><path d="M1 9L9.500 2" stroke="#f4601e" strokeWidth="0.900" /></svg>
                )}
              </div>
              <span className="ml-[19px] text-[13.120px] leading-5 text-[#2a2e33]">{p.n}</span>
              {p.tag && <span className="mr-[16px] ml-auto text-[9.800px] leading-5 text-[#a6b1c4]">{p.tag}</span>}
              {p.menu && <svg viewBox="0 0 8 5" className="mr-[15px] mb-[4px] ml-auto h-[5px] w-[8px]" fill="none" stroke="#8c9cb4"><path d="M1 1l3 3 3-3" /></svg>}
            </div>
          ))}
        </div>
        <div className="mt-[3px] mb-[2px] ml-[3px] w-[6px] rounded-full bg-[#6d6d6d]" />
      </div>
    </div>
  );
}

function Wallpaper() {
  return (
    <svg viewBox="0 0 1448 942" className="absolute inset-0 h-full w-full" preserveAspectRatio="none">
      <defs>
        <linearGradient id="w1" x1="0" y1="0" x2="0" y2="1"><stop offset="0" stopColor="#bdbdbf" /><stop offset="0.450" stopColor="#9a9ea5" /><stop offset="0.780" stopColor="#7f8591" /><stop offset="1" stopColor="#6c7784" /></linearGradient>
        <linearGradient id="w2" x1="0" y1="0" x2="1" y2="0"><stop offset="0" stopColor="#bfbfc2" /><stop offset="0.250" stopColor="#b9bbbf" /><stop offset="0.550" stopColor="#b8bcc0" /><stop offset="0.750" stopColor="#a5a9b1" /><stop offset="0.900" stopColor="#8f949f" /><stop offset="1" stopColor="#868f98" /></linearGradient>
        <linearGradient id="w3" x1="0" y1="0" x2="1" y2="0"><stop offset="0" stopColor="#6f7986" /><stop offset="0.150" stopColor="#7f8592" /><stop offset="0.320" stopColor="#989ca7" /><stop offset="0.480" stopColor="#b1b4b9" /><stop offset="0.620" stopColor="#c5c6c8" /><stop offset="0.750" stopColor="#bababd" /><stop offset="1" stopColor="#bbbbbe" /></linearGradient>
        <linearGradient id="w4" x1="0" y1="0" x2="0" y2="1"><stop offset="0" stopColor="#868f98" /><stop offset="0.250" stopColor="#9196a1" /><stop offset="0.600" stopColor="#a8abb2" /><stop offset="1" stopColor="#bbbbbe" /></linearGradient>
      </defs>
      <rect width="1448" height="942" fill="url(#w1)" />
      <rect width="1448" height="300" fill="url(#w2)" />
      <path d="M500 0H1000L930 120H530z" fill="#c9ccd0" opacity="0.350" />
      <rect y="90" width="41" height="852" fill="url(#w1)" />
      <rect x="1407" y="80" width="41" height="862" fill="url(#w4)" />
      <rect y="857" width="1448" height="85" fill="url(#w3)" />
      <path d="M0 857H254L225 942H0z" fill="#606b79" opacity="0.180" />
      <path d="M505 857H962L933 942H535z" fill="#d0d3d6" opacity="0.180" />
    </svg>
  );
}

export default function App() {
  return (
    <div className="flex h-[1080px] w-[1920px] flex-col overflow-hidden bg-[#1d1d1d] font-['Noto_Sans',sans-serif]">
      <div className="flex h-[27px] shrink-0 items-center pb-px text-[15px] leading-none text-[#ececec]">
        <T w={62} className="ml-[12px]">Activities</T>
        <svg viewBox="0 0 16 16" className="ml-[35px] h-4 w-4"><path d="M1 5L2.500 2.500L4 4.500L6 3.500V6.500L8 8L6 9.500C7 12 11 11 11 8.500C11 6.500 9 5.500 8.500 3C8.500 1.500 9.500.5 10 0C11 2 15.500 3.500 15.500 9A7.500 7 0 0 1 .5 9z" fill="#efefef" /></svg>
        <T w={138} className="ml-[6px]">Firefox Web Browser</T>
        <Caret className="ml-[6px] h-[6px] w-[9px]" />
        <T w={77} className="ml-[674px]">Oct 1  15:31</T>
        <Wifi className="ml-[751px] h-[14px] w-[15px]" />
        <Vol className="ml-[13px] h-[13px] w-[15px]" />
        <MicLine className="ml-[14px] h-[16px] w-[12px]" />
        <Battery className="ml-[14px] h-[15px] w-[15px]" />
        <Caret className="ml-[11px] h-[6px] w-[10px]" />
      </div>
      <div className="flex min-h-0 flex-1">
        <Dock />
        <div className="flex w-[1848px] shrink-0 flex-col">
          <div className="flex h-[37px] shrink-0 items-center border-b border-[#1d1d1d] bg-[#323031]">
            <div className="relative ml-[765px] flex">
              <T w={92} className="text-[15px] font-bold leading-6 text-[#f2f2f2]">GoToTraining</T>
              <T w={59} className="text-[15px] font-bold leading-6 text-[#f2f2f2]"> | GoToT</T>
              <T w={166} className="text-[15px] font-bold leading-6 text-[#f2f2f2]">raining - Mozilla Firefox</T>
              <div className="absolute -top-[6px] left-[95px] flex h-[29px] shadow-lg">
                <span className="flex w-[29px] items-center justify-center bg-[#f3f3f3]"><Firefox className="h-[21px] w-[21px]" /></span>
                <span className="flex w-[26px] items-center justify-center bg-[#ffa733] text-white"><Mic className="h-[15px] w-[12px]" /></span>
              </div>
            </div>
            <span className="mt-[5px] ml-[677px] h-[1.500px] w-[8px] bg-white" />
            <span className="relative ml-[26px] h-[7px] w-[6px] border border-white"><i className="absolute -right-[3px] -top-[3px] h-[6px] w-[5px] border-t border-r border-[#999]" /></span>
            <span className="ml-[22px] flex h-[18px] w-[18px] items-center justify-center rounded-full bg-[#e95420] text-white"><X className="h-[9px] w-[9px]" sw={1.600} /></span>
          </div>
          <FirefoxTabs />
          <FirefoxToolbar />
          <div className="flex min-h-0 flex-1">
            <div className="relative flex w-[1448px] shrink-0 items-start">
              <Wallpaper />
              <div className="relative flex h-full w-full items-start">
                <SharedScreen />
                <div className="mt-auto mb-px ml-[30px] flex h-[36px] w-[10px] shrink-0 flex-col justify-evenly bg-[#495063] px-[2px]">
                  {Array.from({ length: 11 }, (_, k) => (
                    <i key={k} className="h-px bg-[#8f99a8]" />
                  ))}
                </div>
              </div>
            </div>
            <Rail />
            <Attendees />
          </div>
        </div>
      </div>
    </div>
  );
}
